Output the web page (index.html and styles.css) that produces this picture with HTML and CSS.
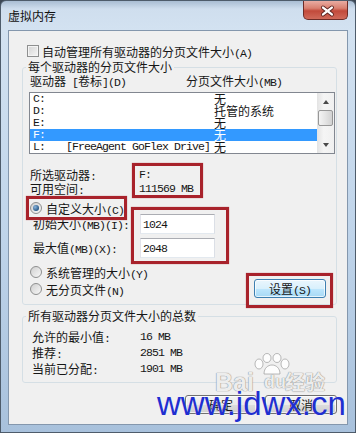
FILE: index.html
```html
<!DOCTYPE html>
<html lang="zh-CN">
<head>
    <meta charset="UTF-8">
    <meta name="viewport" content="width=device-width, initial-scale=1.0">
    <title>虚拟内存</title>
    <link rel="stylesheet" href="styles.css">
</head>
<body>
    <div class="window">
        <div class="titlebar">
            <span class="title">虚拟内存</span>
            <div class="close-btn">
                <svg width="45" height="19" viewBox="0 0 45 19">
                    <path d="M20.5 6.5 L29.5 13.5 M29.5 6.5 L20.5 13.5" stroke="#5b2420" stroke-width="4.2" stroke-linecap="round"/>
                    <path d="M20.5 6.5 L29.5 13.5 M29.5 6.5 L20.5 13.5" stroke="#ffffff" stroke-width="2.4" stroke-linecap="round"/>
                </svg>
            </div>
        </div>

        <div class="client">
            <div class="check-row">
                <span class="checkbox"></span>
                <span>自动管理所有驱动器的分页文件大小<span class="m">(A)</span></span>
            </div>

            <fieldset class="group group-drives">
                <legend>每个驱动器的分页文件大小</legend>
                <div class="list-head">
                    <span>驱动器<span class="m"> [</span>卷标<span class="m">](D)</span></span>
                    <span>分页文件大小<span class="m">(MB)</span></span>
                </div>
                <div class="listbox">
                    <div class="rows">
                        <div class="row"><span class="mv">C:</span><span>无</span></div>
                        <div class="row"><span class="mv">D:</span><span>托管的系统</span></div>
                        <div class="row"><span class="mv">E:</span><span>无</span></div>
                        <div class="row selected"><span class="mv">F:</span><span>无</span></div>
                        <div class="row"><span class="mv">L:<span class="vol">[FreeAgent GoFlex Drive]</span></span><span>无</span></div>
                    </div>
                    <div class="scrollbar">
                        <div class="sb-btn"><span class="arrow-up"></span></div>
                        <div class="sb-track"><div class="sb-thumb"></div></div>
                        <div class="sb-btn"><span class="arrow-down"></span></div>
                    </div>
                </div>

                <div class="info">
                    <span>所选驱动器<span class="m">:</span></span><span class="mv">F:</span>
                    <span>可用空间<span class="m">:</span></span><span class="mv">111569 MB</span>
                </div>

                <div class="radio-row custom">
                    <span class="radio checked"></span>
                    <span>自定义大小<span class="m">(C)</span></span>
                </div>

                <div class="sizes">
                    <span class="size-label">初始大小<span class="m">(MB)(I):</span></span>
                    <div class="field"><span class="mv">1024</span></div>
                    <span class="size-label">最大值<span class="m">(MB)(X):</span></span>
                    <div class="field"><span class="mv">2048</span></div>
                </div>

                <div class="bottom-row">
                    <div class="radios">
                        <div class="radio-row">
                            <span class="radio"></span>
                            <span>系统管理的大小<span class="m">(Y)</span></span>
                        </div>
                        <div class="radio-row">
                            <span class="radio"></span>
                            <span>无分页文件<span class="m">(N)</span></span>
                        </div>
                    </div>
                    <div class="btn btn-hot set-btn"><span>设置<span class="m">(S)</span></span></div>
                </div>
            </fieldset>

            <fieldset class="group group-total">
                <legend>所有驱动器分页文件大小的总数</legend>
                <div class="totals">
                    <span>允许的最小值<span class="m">:</span></span><span class="mv">16 MB</span>
                    <span>推荐<span class="m">:</span></span><span class="mv">2851 MB</span>
                    <span>当前已分配<span class="m">:</span></span><span class="mv">1901 MB</span>
                </div>
            </fieldset>

            <div class="actions">
                <div class="btn">确定</div>
                <div class="btn">取消</div>
            </div>
        </div>

        <!-- annotation boxes drawn over the dialog -->
        <div class="mark mark-drive"></div>
        <div class="mark mark-custom"></div>
        <div class="mark mark-sizes"></div>
        <div class="mark mark-set"></div>

        <div class="wm-baidu">
            <svg class="paw" width="44" height="22" viewBox="0 0 44 22">
                <g fill="rgba(255,255,255,0.85)" stroke="rgba(140,140,140,0.6)" stroke-width="1">
                    <ellipse cx="9" cy="11" rx="4" ry="5"/>
                    <ellipse cx="17" cy="5" rx="4" ry="4.5"/>
                    <ellipse cx="27" cy="5" rx="4" ry="4.5"/>
                    <ellipse cx="35" cy="11" rx="4" ry="5"/>
                    <path d="M14 21 C14 15 18 12 22 12 C26 12 30 15 30 21 Z"/>
                </g>
            </svg>
            <span class="bai">Bai</span><span class="du">du</span><span class="jy">经验</span>
        </div>
        <div class="wm-site">www.jdwx.cn</div>
    </div>
</body>
</html>
```

FILE: styles.css
```css
body {
    margin: 0;
    background-color: #3d4855;
    font-family: "Noto Sans CJK SC", sans-serif;
    font-size: 12px;
    color: #161616;
}

/* half-width latin, like the dialog's bitmap font */
.m, .mv {
    font-family: "Liberation Mono", monospace;
    font-size: 11.5px;
    letter-spacing: -0.9px;
}

/* inline inside CJK text: keep the line box from growing */
.m {
    line-height: 9px;
}

/* window frame */
.window {
    position: relative;
    width: 356px;
    height: 433px;
    box-sizing: border-box;
    border: 1px solid #4e5c6b;
    border-radius: 6px 6px 0 0;
    background: linear-gradient(180deg, #a9bdd3 0, #cfdeee 8px, #d3e2f1 30px, #bfd4ea 55%, #a8c1dc 100%);
    display: flex;
    flex-direction: column;
    overflow: hidden;
}

.titlebar {
    height: 29px;
    display: flex;
    justify-content: space-between;
    align-items: flex-start;
    padding-left: 7px;
    flex-shrink: 0;
}

.title {
    line-height: 29px;
    color: #101010;
}

.close-btn {
    width: 45px;
    height: 19px;
    margin-right: 7px;
    box-sizing: border-box;
    border: 1px solid #6d2c27;
    border-top: none;
    border-radius: 0 0 5px 5px;
    background: linear-gradient(180deg, #e9aca2 0%, #d98070 40%, #c24a3b 55%, #d06a5a 100%);
    display: flex;
    align-items: center;
    justify-content: center;
}

.close-btn svg {
    display: block;
    margin-left: -1px;
}

.client {
    margin: 0 7px 7px;
    height: 395px;
    box-sizing: border-box;
    border: 1px solid #8497ad;
    background-color: #f0f0f0;
    padding: 13px 10px 0 13px;
    display: flex;
    flex-direction: column;
}

/* checkbox and radios */
.check-row {
    display: flex;
    align-items: center;
    gap: 3px;
    height: 14px;
    margin-left: 5px;
    flex-shrink: 0;
}

.checkbox {
    width: 12px;
    height: 12px;
    box-sizing: border-box;
    border: 1px solid #8e8f8f;
    background: linear-gradient(135deg, #d3d3d3, #f6f6f6);
    box-shadow: inset 0 0 0 1px #f4f4f4;
}

.radio-row {
    display: flex;
    align-items: center;
    gap: 4px;
    height: 14px;
    padding-left: 1px;
}

.radio {
    width: 12px;
    height: 12px;
    box-sizing: border-box;
    border: 1px solid #8e8f8f;
    border-radius: 50%;
    background: linear-gradient(135deg, #cfcfcf, #f8f8f8);
    display: flex;
    align-items: center;
    justify-content: center;
}

.radio.checked::after {
    content: "";
    width: 6px;
    height: 6px;
    border-radius: 50%;
    background: radial-gradient(circle at 35% 35%, #8ab4dc, #2a5a88 70%, #1b3f66);
}

/* group boxes */
.group {
    margin: 0;
    border: 1px solid #d5dfe5;
    border-radius: 3px;
    padding: 0 1px 8px 6px;
    min-width: 0;
    flex-shrink: 0;
}

.group legend {
    padding: 0 2px;
    margin-left: -3px;
    line-height: 14px;
}

.group-drives {
    margin-top: 2px;
}

.list-head {
    display: grid;
    grid-template-columns: 156px auto;
    line-height: 14px;
    padding-left: 1px;
}

/* list box */
.listbox {
    margin-top: 4px;
    height: 62px;
    box-sizing: border-box;
    border: 1px solid #828790;
    background-color: #ffffff;
    display: flex;
}

.rows {
    flex: 1;
}

.row {
    display: grid;
    grid-template-columns: 181px auto;
    height: 12px;
    line-height: 12px;
    padding-left: 3px;
    white-space: nowrap;
}

.row.selected {
    background-color: #3399ff;
    color: #ffffff;
}

.vol {
    margin-left: 21px;
}

.scrollbar {
    width: 17px;
    display: flex;
    flex-direction: column;
    background: linear-gradient(90deg, #e3e3e3, #f5f5f5 40%, #f0f0f0);
}

.sb-btn {
    height: 17px;
    display: flex;
    align-items: center;
    justify-content: center;
}

.arrow-up, .arrow-down {
    width: 0;
    height: 0;
    border-left: 3.5px solid transparent;
    border-right: 3.5px solid transparent;
}

.arrow-up {
    border-bottom: 4px solid #4a4a4a;
}

.arrow-down {
    border-top: 4px solid #4a4a4a;
}

.sb-track {
    flex: 1;
}

.sb-thumb {
    height: 16px;
    margin: 0 1px;
    box-sizing: border-box;
    border: 1px solid #979797;
    border-radius: 2px;
    background: linear-gradient(90deg, #f4f4f4, #e4e4e4 50%, #d2d2d2);
}

/* drive info */
.info {
    margin-top: 14px;
    display: grid;
    grid-template-columns: 109px auto;
    line-height: 14px;
    padding-left: 1px;
}

.custom {
    margin-top: 6px;
    height: 12px;
}

.sizes {
    display: grid;
    grid-template-columns: 111px 75px;
    row-gap: 4px;
    align-items: center;
}

.size-label {
    padding-left: 4px;
    line-height: 14px;
}

.field {
    height: 20px;
    box-sizing: border-box;
    border: 1px solid #abadb3;
    border-color: #abadb3 #dbdfe6 #e3e9ef #e2e3ea;
    background-color: #ffffff;
    padding-left: 2px;
    display: flex;
    align-items: center;
}

.bottom-row {
    margin-top: 7px;
    display: flex;
    justify-content: space-between;
}

.radios {
    display: flex;
    flex-direction: column;
    gap: 3px;
}

/* buttons */
.btn {
    width: 72px;
    height: 19px;
    box-sizing: border-box;
    border: 1px solid #707070;
    border-radius: 3px;
    background: linear-gradient(180deg, #f2f2f2 0%, #ebebeb 50%, #dddddd 51%, #cfcfcf 100%);
    box-shadow: inset 0 0 0 1px rgba(255, 255, 255, 0.7);
    display: flex;
    align-items: center;
    justify-content: center;
    line-height: 14px;
}

.btn-hot {
    border-color: #3c7fb1;
    background: linear-gradient(180deg, #eaf6fd 0%, #d9f0fc 50%, #bee6fd 51%, #a7d9f5 100%);
}

.set-btn {
    align-self: flex-end;
    margin-right: 9px;
    margin-bottom: -2px;
}

.group-total {
    margin-top: 4px;
    padding-bottom: 5px;
}

.totals {
    margin-top: 6px;
    display: grid;
    grid-template-columns: 111px auto;
    line-height: 16px;
}

.totals > span:nth-child(odd) {
    padding-left: 3px;
}

.actions {
    margin-top: 12px;
    display: flex;
    justify-content: flex-end;
    gap: 8px;
}

/* red annotation boxes */
.mark {
    position: absolute;
    box-sizing: border-box;
    border: 3px solid #a8222b;
    box-shadow: 0 0 1px rgba(168, 34, 43, 0.6);
}

.mark-drive {
    left: 131px;
    top: 162px;
    width: 71px;
    height: 35px;
}

.mark-custom {
    left: 25px;
    top: 195px;
    width: 101px;
    height: 24px;
}

.mark-sizes {
    left: 130px;
    top: 206px;
    width: 98px;
    height: 57px;
}

.mark-set {
    left: 245px;
    top: 272px;
    width: 87px;
    height: 35px;
}

/* watermarks */
.wm-baidu {
    position: absolute;
    left: 213px;
    top: 352px;
    width: 120px;
    height: 44px;
    font-family: "Liberation Sans", sans-serif;
    font-weight: bold;
    color: rgba(255, 255, 255, 0.85);
    text-shadow: 0 0 1px #8c8c8c, 0 0 1px #8c8c8c;
    line-height: 22px;
}

.paw {
    position: absolute;
    left: 36px;
    top: 0;
}

.wm-baidu .bai,
.wm-baidu .du,
.wm-baidu .jy {
    position: absolute;
    top: 18px;
}

.bai {
    left: 1px;
    font-size: 25px;
}

.du {
    left: 50px;
    font-size: 18px;
    top: 21px;
}

.jy {
    left: 71px;
    font-family: "Noto Sans CJK SC", sans-serif;
    font-size: 20px;
}

.wm-site {
    position: absolute;
    left: 156px;
    top: 386px;
    font-family: "Liberation Sans", sans-serif;
    font-size: 33px;
    line-height: 33px;
    color: #1f2fd0;
    text-shadow: 0 0 1px rgba(255, 255, 255, 0.8);
    white-space: nowrap;
}
```
